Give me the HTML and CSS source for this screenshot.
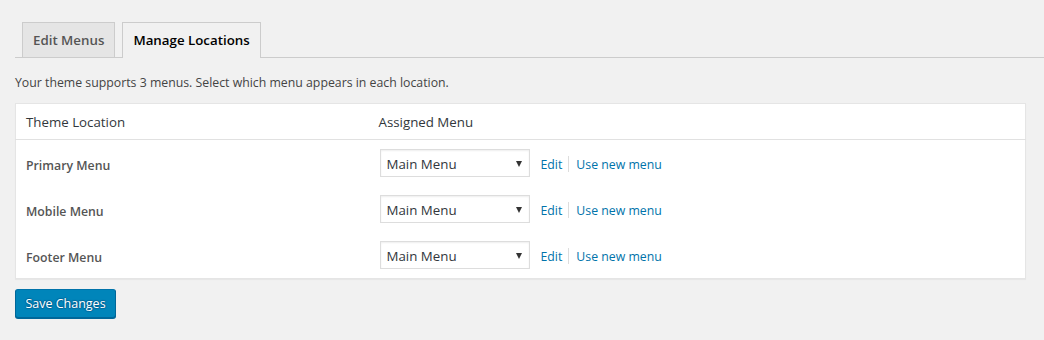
FILE: index.html
```html
<!DOCTYPE html>
<html lang="en">
<head>
<meta charset="utf-8">
<title>Manage Locations</title>
<link rel="stylesheet" href="styles.css">
</head>
<body>
<div class="wrap">
  <nav class="tabs">
    <a class="tab" href="#">Edit Menus</a>
    <a class="tab active" href="#">Manage Locations</a>
  </nav>
  <p class="desc">Your theme supports 3 menus. Select which menu appears in each location.</p>
  <table class="locations">
    <thead>
      <tr><th class="col-loc">Theme Location</th><th>Assigned Menu</th></tr>
    </thead>
    <tbody>
      <tr>
        <td class="loc">Primary Menu</td>
        <td><div class="assign"><div class="select">Main Menu<span class="arrow"></span></div><a href="#">Edit</a><span class="sep"></span><a href="#">Use new menu</a></div></td>
      </tr>
      <tr>
        <td class="loc">Mobile Menu</td>
        <td><div class="assign"><div class="select">Main Menu<span class="arrow"></span></div><a href="#">Edit</a><span class="sep"></span><a href="#">Use new menu</a></div></td>
      </tr>
      <tr>
        <td class="loc">Footer Menu</td>
        <td><div class="assign"><div class="select">Main Menu<span class="arrow"></span></div><a href="#">Edit</a><span class="sep"></span><a href="#">Use new menu</a></div></td>
      </tr>
    </tbody>
  </table>
  <button class="btn">Save Changes</button>
</div>
</body>
</html>
```
FILE: styles.css
```css
html, body { margin: 0; padding: 0; }
body {
  background: #f1f1f1;
  font-family: "Open Sans", "Noto Sans", sans-serif;
  font-size: 12.3px;
  color: #444;
  width: 1044px;
  height: 340px;
  overflow: hidden;
}
.wrap { padding: 22px 0 0 15px; }
.tabs {
  display: flex;
  gap: 7px;
  padding-left: 7px;
  border-bottom: 1px solid #ccc;
  height: 35px;
}
.tab {
  display: block;
  box-sizing: border-box;
  height: 35px;
  padding: 0 10px;
  line-height: 35px;
  font-size: 13.3px;
  font-weight: 600;
  color: #555;
  background: #e5e5e5;
  border: 1px solid #ccc;
  border-bottom: none;
  text-decoration: none;
}
.tab.active {
  background: #f1f1f1;
  color: #000;
  height: 36px;
  margin-bottom: -1px;
}
.desc {
  margin: 0;
  padding-top: 16px;
  line-height: 17px;
  height: 29px;
  color: #444;
}
.locations {
  width: 1011px;
  border-collapse: collapse;
  background: #fff;
  border: 1px solid #e5e5e5;
  box-shadow: 0 1px 1px rgba(0,0,0,.04);
}
.locations th {
  text-align: left;
  font-weight: 400;
  font-size: 13.3px;
  color: #32373c;
  height: 36px;
  padding: 0 10px;
  border-bottom: 1px solid #e1e1e1;
  box-sizing: border-box;
}
.col-loc { width: 353px; }
.locations td {
  padding: 9px 10px;
  vertical-align: middle;
}
.loc {
  font-weight: 600;
  color: #555;
  padding-top: 14px !important;
}
.assign {
  display: flex;
  align-items: center;
  height: 28px;
  padding-left: 1px;
  padding-top: 2px;
  box-sizing: border-box;
}
.select {
  box-sizing: border-box;
  width: 150px;
  height: 28px;
  margin-top: -2px;
  border: 1px solid #ddd;
  box-shadow: inset 0 1px 2px rgba(0,0,0,.07);
  padding: 1px 6px 0;
  line-height: 26px;
  font-size: 13.3px;
  color: #32373c;
  position: relative;
  margin-right: 11px;
}
.arrow {
  position: absolute;
  right: 7px;
  top: 11px;
  width: 0;
  height: 0;
  border-left: 3.5px solid transparent;
  border-right: 3.5px solid transparent;
  border-top: 6px solid #333;
}
.assign a {
  color: #0073aa;
  text-decoration: none;
}
.sep {
  display: block;
  width: 1px;
  height: 16px;
  background: #ddd;
  margin: 0 7px 0 6px;
}
.btn {
  margin-top: 10px;
  box-sizing: border-box;
  width: 101px;
  height: 29px;
  padding: 0;
  background: #0085ba;
  border: 1px solid #0073aa;
  border-color: #0073aa #006799 #006799;
  border-radius: 3px;
  box-shadow: 0 1px 0 #006799;
  color: #fff;
  font-family: inherit;
  font-size: 12.5px;
  text-shadow: 0 -1px 1px #006799, 1px 0 1px #006799, 0 1px 1px #006799, -1px 0 1px #006799;
}
```
